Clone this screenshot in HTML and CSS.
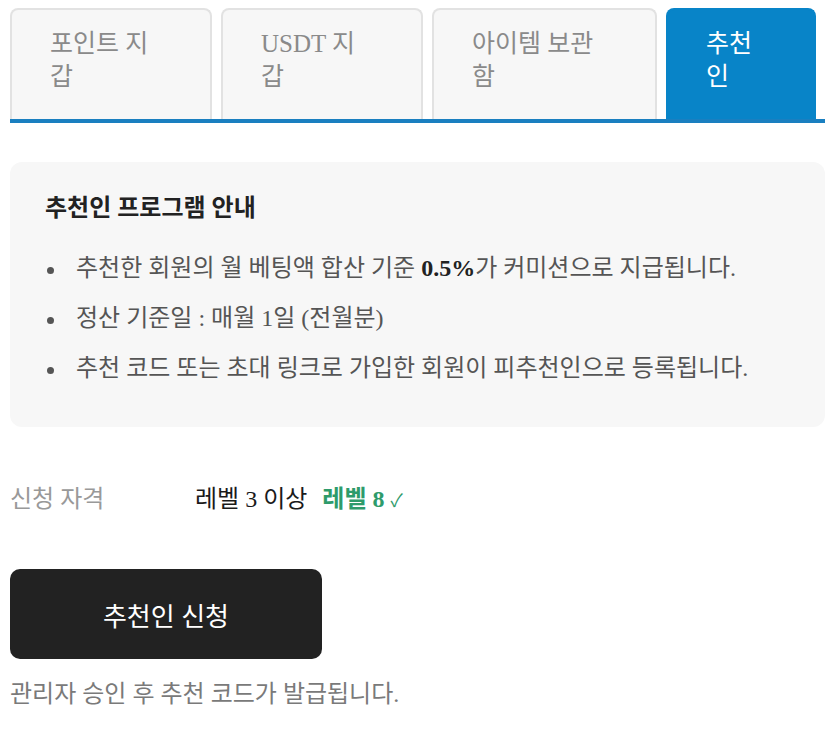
FILE: index.html
```html
<!DOCTYPE html>
<html lang="ko">
<head>
<meta charset="utf-8">
<title>추천인</title>
<link rel="stylesheet" href="styles.css">
</head>
<body>
<div class="page">
  <nav class="tabs">
    <a class="tab">포인트 지갑</a>
    <a class="tab">USDT 지갑</a>
    <a class="tab">아이템 보관함</a>
    <a class="tab tab-active">추천인</a>
  </nav>

  <section class="notice">
    <h3 class="notice-title">추천인 프로그램 안내</h3>
    <ul class="notice-list">
      <li>추천한 회원의 월 베팅액 합산 기준 <strong>0.5%</strong>가 커미션으로 지급됩니다.</li>
      <li>정산 기준일 : 매월 1일 (전월분)</li>
      <li>추천 코드 또는 초대 링크로 가입한 회원이 피추천인으로 등록됩니다.</li>
    </ul>
  </section>

  <div class="eligibility">
    <span class="eligibility-label">신청 자격</span>
    <span class="eligibility-req">레벨 3 이상</span>
    <span class="eligibility-current">레벨 8 <span class="check">✓</span></span>
  </div>

  <a class="apply-btn">추천인 신청</a>
  <p class="hint">관리자 승인 후 추천 코드가 발급됩니다.</p>
</div>
</body>
</html>
```

FILE: styles.css
```css
html, body {
  margin: 0;
  padding: 0;
  background: #ffffff;
}

body {
  font-family: "Liberation Serif", "Noto Sans CJK KR", serif;
  color: #222222;
}

.page {
  padding: 8px 10px 0 10px;
}

/* Tab strip */
.tabs {
  display: grid;
  grid-template-columns: 202px 202px 225px 150px;
  column-gap: 9px;
  border-bottom: 4px solid #1a7fc0;
}

.tab {
  display: block;
  height: 111px;
  box-sizing: border-box;
  padding: 17px 48px 0 38px;
  border: 2px solid #e2e2e2;
  border-bottom: none;
  border-radius: 8px 8px 0 0;
  background: #f7f7f7;
  color: #8a8a8a;
  font-size: 25px;
  line-height: 33px;
  cursor: pointer;
}

.tab-active {
  background: #0884c8;
  border-color: #0884c8;
  color: #ffffff;
}

/* Info box */
.notice {
  margin-top: 39px;
  padding: 30px 35px 43px 35px;
  background: #f7f7f7;
  border-radius: 12px;
}

.notice-title {
  margin: 0;
  font-size: 24px;
  line-height: 32px;
  font-weight: 700;
  color: #222222;
}

.notice-list {
  margin: 28px 0 0 0;
  padding: 0;
  list-style: none;
  color: #555555;
  font-size: 24px;
  line-height: 32px;
}

.notice-list li::before {
  content: "";
  display: inline-block;
  width: 7px;
  height: 7px;
  margin: 0 22px 0 2px;
  border-radius: 50%;
  background: #555555;
  vertical-align: middle;
}

.notice-list li + li {
  margin-top: 18px;
}

.notice-list strong {
  color: #222222;
}

/* Eligibility row */
.eligibility {
  display: flex;
  align-items: baseline;
  margin-top: 56px;
  font-size: 24px;
  line-height: 32px;
}

.eligibility-label {
  width: 185px;
  color: #999999;
}

.eligibility-req {
  color: #1a1a1a;
}

.eligibility-current {
  margin-left: 15px;
  color: #2e9b6b;
  font-weight: 700;
}

.check {
  font-weight: 400;
  font-size: 18px;
}

/* Apply button */
.apply-btn {
  display: flex;
  align-items: center;
  justify-content: center;
  width: 312px;
  height: 90px;
  margin-top: 52px;
  border-radius: 10px;
  background: #222222;
  color: #ffffff;
  font-size: 26px;
  cursor: pointer;
}

.hint {
  margin: 19px 0 0 0;
  color: #7a7a7a;
  font-size: 24px;
  line-height: 32px;
}
```
